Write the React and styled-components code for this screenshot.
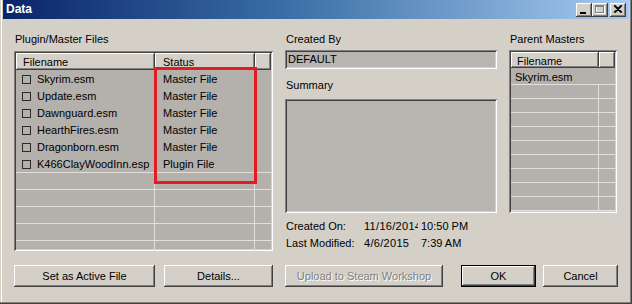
import React from 'react';
import styled, { createGlobalStyle } from 'styled-components';

const Global = createGlobalStyle`
  html, body { margin: 0; padding: 0; background: #d4d0c8; }
  body {
    font-family: "Liberation Sans", Arial, sans-serif;
    font-size: 11px;
    color: #000;
  }
  * { box-sizing: border-box; }
`;

const raised = `box-shadow: inset -1px -1px #404040, inset 1px 1px #ffffff, inset -2px -2px #808080, inset 2px 2px #d4d0c8;`;
const sunken = `box-shadow: inset 1px 1px #808080, inset -1px -1px #ffffff, inset 2px 2px #404040, inset -2px -2px #d4d0c8;`;

const Window = styled.div`
  width: 632px;
  height: 304px;
  background: #d4d0c8;
  display: flex;
  flex-direction: column;
  box-shadow: inset -1px -1px #404040, inset -2px -2px #808080, inset 1px 0 #d4d0c8, inset 2px 0 #ffffff;
`;

const TitleBar = styled.div`
  height: 19px;
  margin: 0 3px;
  padding: 0 3px;
  display: flex;
  align-items: center;
  background: linear-gradient(to right, #0a246a 0%, #3a6ea5 45%, #a6caf0 100%);
  color: #fff;
  font-weight: bold;
  font-size: 12px;
`;

const TitleText = styled.span`
  line-height: 19px;
`;

const TitleButtons = styled.div`
  margin-left: auto;
  display: flex;
  align-items: center;
`;

const TitleButton = styled.div`
  width: 16px;
  height: 14px;
  background: #d4d0c8;
  ${raised}
  margin-left: ${p => p.$gap || 0}px;
  display: flex;
  align-items: center;
  justify-content: center;
`;

const Body = styled.div`
  flex: 1;
  padding: 14px 14px 0 14px;
  display: flex;
  flex-direction: column;
`;

const Top = styled.div`
  display: grid;
  grid-template-columns: 259px 212px 108px;
  column-gap: 12px;
  align-items: start;
  height: 232px;
`;

const Column = styled.div`
  display: flex;
  flex-direction: column;
`;

const Label = styled.div`
  line-height: 13px;
  padding-left: 1px;
  margin-top: ${p => p.$top || 0}px;
  margin-bottom: ${p => p.$bottom || 4}px;
  white-space: nowrap;
`;

const ListBox = styled.div`
  position: relative;
  height: ${p => p.$height}px;
  background: #b4b0ab;
  ${sunken}
  padding: 2px;
  display: flex;
  flex-direction: column;
  overflow: hidden;
`;

const HeaderRow = styled.div`
  display: grid;
  grid-template-columns: ${p => p.$cols};
  height: ${p => p.$height}px;
  flex: none;
`;

const HeaderCell = styled.div`
  background: #d4d0c8;
  box-shadow: inset -1px -1px #404040, inset 1px 1px #ffffff, inset -2px -2px #808080;
  padding-left: ${p => p.$pad || 6}px;
  display: flex;
  align-items: center;
  padding-top: 1px;
  white-space: nowrap;
`;

const Row = styled.div`
  display: grid;
  grid-template-columns: ${p => p.$cols};
  height: ${p => p.$height}px;
  flex: none;
`;

const EmptyRow = styled(Row)`
  border-top: 1px solid #e2ded9;
`;

const Cell = styled.div`
  padding-left: ${p => p.$pad || 6}px;
  padding-top: 1px;
  display: flex;
  align-items: center;
  white-space: nowrap;
  overflow: hidden;
`;

const GridCell = styled.div`
  border-right: ${p => (p.$last ? 'none' : '1px solid #e2ded9')};
`;

const Check = styled.span`
  width: 9px;
  height: 9px;
  border: 1px solid #2a2a2a;
  margin-right: 6px;
  flex: none;
`;

const Highlight = styled.div`
  position: absolute;
  left: 140px;
  top: 16px;
  width: 103px;
  height: 117px;
  border: 3px solid #e31b23;
  pointer-events: none;
`;

const Field = styled.div`
  height: ${p => p.$height}px;
  background: #b8b4b0;
  ${sunken}
  padding-left: 3px;
  line-height: ${p => p.$height}px;
`;

const Info = styled.div`
  display: grid;
  grid-template-columns: 78px 57px auto;
  line-height: 17px;
  margin-top: 5px;
  padding-left: 1px;
`;

const InfoValue = styled.span`
  display: block;
  white-space: nowrap;
  overflow: hidden;
  width: ${p => (p.$clip ? `${p.$clip}px` : 'auto')};
  letter-spacing: ${p => (p.$wide ? '0.3px' : '0')};
`;

const ButtonRow = styled.div`
  display: flex;
`;

const Button = styled.button`
  width: ${p => p.$w}px;
  height: 22px;
  margin: 0 0 0 ${p => p.$gap || 0}px;
  padding: 0;
  border: none;
  background: #d4d0c8;
  font-family: "Liberation Sans", Arial, sans-serif;
  font-size: 11px;
  color: #000;
  ${raised}
  ${p => p.$default && `box-shadow: inset 0 0 0 1px #000000, inset -2px -2px #404040, inset 2px 2px #ffffff, inset -3px -3px #808080;`}
  &:disabled {
    color: #808080;
    text-shadow: 1px 1px #ffffff;
  }
`;

const files = [
  ['Skyrim.esm', 'Master File'],
  ['Update.esm', 'Master File'],
  ['Dawnguard.esm', 'Master File'],
  ['HearthFires.esm', 'Master File'],
  ['Dragonborn.esm', 'Master File'],
  ['K466ClayWoodInn.esp', 'Plugin File'],
];

const LEFT_COLS = '139px 100px 1fr';
const RIGHT_COLS = '88px 1fr';

function EmptyRows({ count, cols, height, n }) {
  return Array.from({ length: count }).map((_, i) => (
    <EmptyRow key={i} $cols={cols} $height={height}>
      {Array.from({ length: n }).map((__, j) => (
        <GridCell key={j} $last={j === n - 1} />
      ))}
    </EmptyRow>
  ));
}

export default function App() {
  return (
    <>
      <Global />
      <Window>
        <TitleBar>
          <TitleText>Data</TitleText>
          <TitleButtons>
            <TitleButton>
              <svg width="10" height="10" viewBox="0 0 10 10">
                <rect x="1" y="7" width="6" height="2" fill="#000" />
              </svg>
            </TitleButton>
            <TitleButton>
              <svg width="10" height="10" viewBox="0 0 10 10">
                <rect x="1.5" y="1.5" width="8" height="7" fill="none" stroke="#ffffff" />
                <rect x="0.5" y="0.5" width="8" height="7" fill="none" stroke="#808080" />
                <line x1="0.5" y1="1.5" x2="8.5" y2="1.5" stroke="#808080" />
              </svg>
            </TitleButton>
            <TitleButton $gap={2}>
              <svg width="10" height="9" viewBox="0 0 10 9">
                <path d="M1 0.5 L8 7.5 M2 0.5 L9 7.5 M8 0.5 L1 7.5 M9 0.5 L2 7.5" stroke="#000" strokeWidth="1.1" />
              </svg>
            </TitleButton>
          </TitleButtons>
        </TitleBar>
        <Body>
          <Top>
            <Column>
              <Label $bottom={5}>Plugin/Master Files</Label>
              <ListBox $height={200}>
                <HeaderRow $cols={LEFT_COLS} $height={17}>
                  <HeaderCell $pad={7}>Filename</HeaderCell>
                  <HeaderCell $pad={8}>Status</HeaderCell>
                  <HeaderCell />
                </HeaderRow>
                {files.map(([name, status]) => (
                  <Row key={name} $cols={LEFT_COLS} $height={17}>
                    <Cell $pad={6}>
                      <Check />
                      {name}
                    </Cell>
                    <Cell $pad={8}>{status}</Cell>
                    <Cell />
                  </Row>
                ))}
                <EmptyRows count={5} cols={LEFT_COLS} height={17} n={3} />
                <Highlight />
              </ListBox>
            </Column>
            <Column>
              <Label>Created By</Label>
              <Field $height={19}>DEFAULT</Field>
              <Label $top={10} $bottom={7}>Summary</Label>
              <Field $height={114} />
              <Info>
                <span>Created On:</span>
                <InfoValue $wide $clip={54}>11/16/2014</InfoValue>
                <InfoValue>10:50 PM</InfoValue>
                <span>Last Modified:</span>
                <InfoValue $wide $clip={54}>4/6/2015</InfoValue>
                <InfoValue>7:39 AM</InfoValue>
              </Info>
            </Column>
            <Column>
              <Label>Parent Masters</Label>
              <ListBox $height={163}>
                <HeaderRow $cols={RIGHT_COLS} $height={16}>
                  <HeaderCell $pad={6}>Filename</HeaderCell>
                  <HeaderCell />
                </HeaderRow>
                <Row $cols={RIGHT_COLS} $height={16}>
                  <Cell $pad={4}>Skyrim.esm</Cell>
                  <Cell />
                </Row>
                <EmptyRows count={10} cols={RIGHT_COLS} height={14} n={2} />
              </ListBox>
            </Column>
          </Top>
          <ButtonRow>
            <Button $w={141}>Set as Active File</Button>
            <Button $w={109} $gap={9}>Details...</Button>
            <Button $w={158} $gap={12} disabled>Upload to Steam Workshop</Button>
            <Button $w={75} $gap={18} $default>OK</Button>
            <Button $w={75} $gap={7}>Cancel</Button>
          </ButtonRow>
        </Body>
      </Window>
    </>
  );
}
